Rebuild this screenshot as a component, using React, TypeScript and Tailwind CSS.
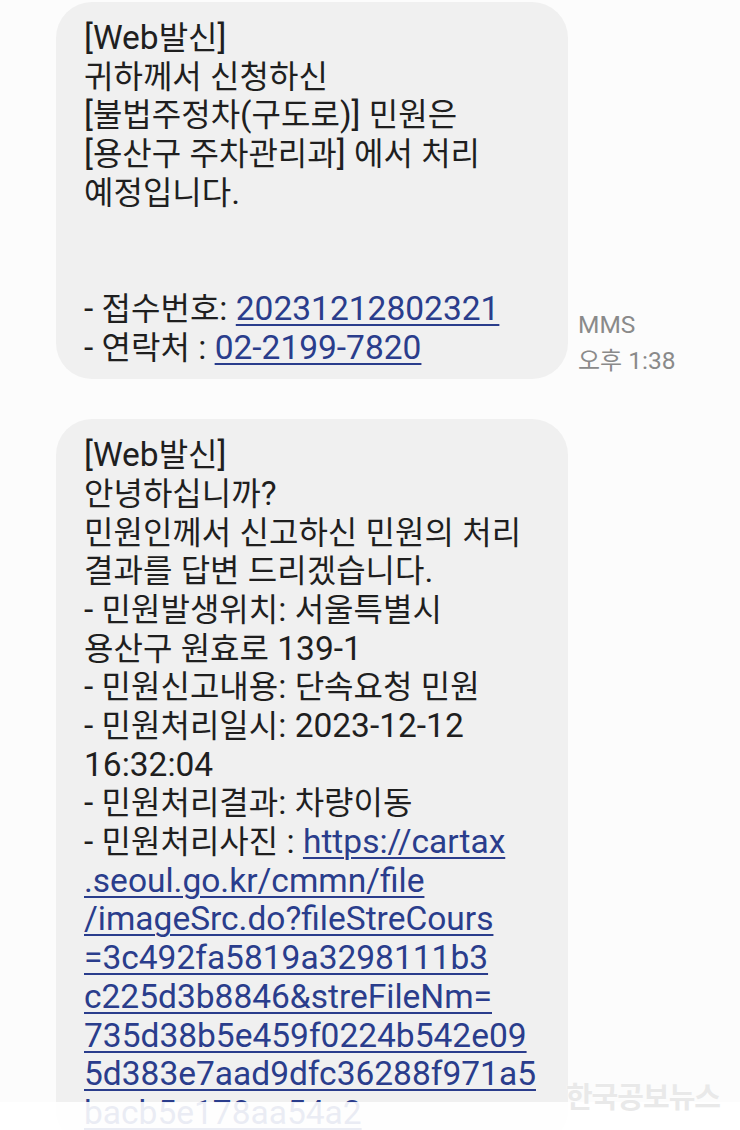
import React from 'react';

const LATIN = "font-['Roboto','Noto_Sans_CJK_KR',sans-serif]";

// 한글 구간만 CJK 폰트로 — 삼성 폰트의 한글 폭에 맞춤
const T = ({ text }: { text: string }) => {
  const parts = text.split(/([\uAC00-\uD7A3]+)/);
  return (
    <>
      {parts.map((p, i) =>
        /[\uAC00-\uD7A3]/.test(p) ? (
          <span key={i} className="font-['Noto_Sans_CJK_KR',sans-serif] text-[32px] leading-none">
            {p}
          </span>
        ) : (
          <span key={i}>{p}</span>
        ),
      )}
    </>
  );
};

const Link = ({ children }: { children: React.ReactNode }) => (
  <span className="text-[#2a3d8c] underline decoration-2 underline-offset-[4px]">{children}</span>
);

const Line = ({ children }: { children?: React.ReactNode }) => (
  <div className="h-[38.7px] leading-[38.7px] whitespace-nowrap">{children ?? '\u00a0'}</div>
);

const Bubble = ({ children }: { children: React.ReactNode }) => (
  <div className="w-[512px] shrink-0 rounded-[36px] bg-[#f0f0f0] pl-[28px] pr-4 pt-[17px] pb-[12px] text-[33.5px] text-[#1f1f1f]">
    {children}
  </div>
);

const urlLines = [
  '.seoul.go.kr/cmmn/file',
  '/imageSrc.do?fileStreCours',
  '=3c492fa5819a3298111b3',
  'c225d3b8846&streFileNm=',
  '735d38b5e459f0224b542e09',
  '5d383e7aad9dfc36288f971a5',
  'bacb5e178aa54a2',
];

export default function App() {
  return (
    <div className={`relative h-[1130px] w-[740px] overflow-hidden bg-[#fcfcfc] ${LATIN}`}>
      <div className="flex flex-col gap-[40px] pl-[56px] pt-[2px]">
        {/* 첫 번째 문자 */}
        <div className="flex items-end gap-[10px]">
          <Bubble>
            <Line><T text="[Web발신]" /></Line>
            <Line><T text="귀하께서 신청하신" /></Line>
            <Line><T text="[불법주정차(구도로)] 민원은" /></Line>
            <Line><T text="[용산구 주차관리과] 에서 처리" /></Line>
            <Line><T text="예정입니다." /></Line>
            <Line />
            <Line />
            <Line>
              <T text="- 접수번호: " />
              <Link>20231212802321</Link>
            </Line>
            <Line>
              <T text="- 연락처 : " />
              <Link>02-2199-7820</Link>
            </Line>
          </Bubble>
          <div className="pb-[1px] text-[24.5px] leading-[34px] text-[#8a8a8a]">
            <div>MMS</div>
            <div>
              <span className="font-['Noto_Sans_CJK_KR',sans-serif] text-[24px]">오후</span> 1:38
            </div>
          </div>
        </div>

        {/* 두 번째 문자 */}
        <div className="flex items-start">
          <Bubble>
            <Line><T text="[Web발신]" /></Line>
            <Line><T text="안녕하십니까?" /></Line>
            <Line><T text="민원인께서 신고하신 민원의 처리" /></Line>
            <Line><T text="결과를 답변 드리겠습니다." /></Line>
            <Line><T text="- 민원발생위치: 서울특별시" /></Line>
            <Line><T text="용산구 원효로 139-1" /></Line>
            <Line><T text="- 민원신고내용: 단속요청 민원" /></Line>
            <Line><T text="- 민원처리일시: 2023-12-12" /></Line>
            <Line><T text="16:32:04" /></Line>
            <Line><T text="- 민원처리결과: 차량이동" /></Line>
            <Line>
              <T text="- 민원처리사진 : " />
              <Link>https://cartax</Link>
            </Line>
            {urlLines.map((u) => (
              <Line key={u}>
                <Link>{u}</Link>
              </Line>
            ))}
          </Bubble>
        </div>
      </div>

      {/* 하단 입력창 페이드 */}
      <div className="absolute inset-x-0 bottom-0 h-[28px] bg-white/90" />

      {/* 워터마크 */}
      <div className="absolute right-[20px] top-[1074px] font-['Noto_Sans_CJK_KR',sans-serif] text-[29px] font-bold tracking-[-1px] text-[#e9e9e9] [text-shadow:0_0_2px_#ffffff]">
        한국공보뉴스
      </div>
    </div>
  );
}
